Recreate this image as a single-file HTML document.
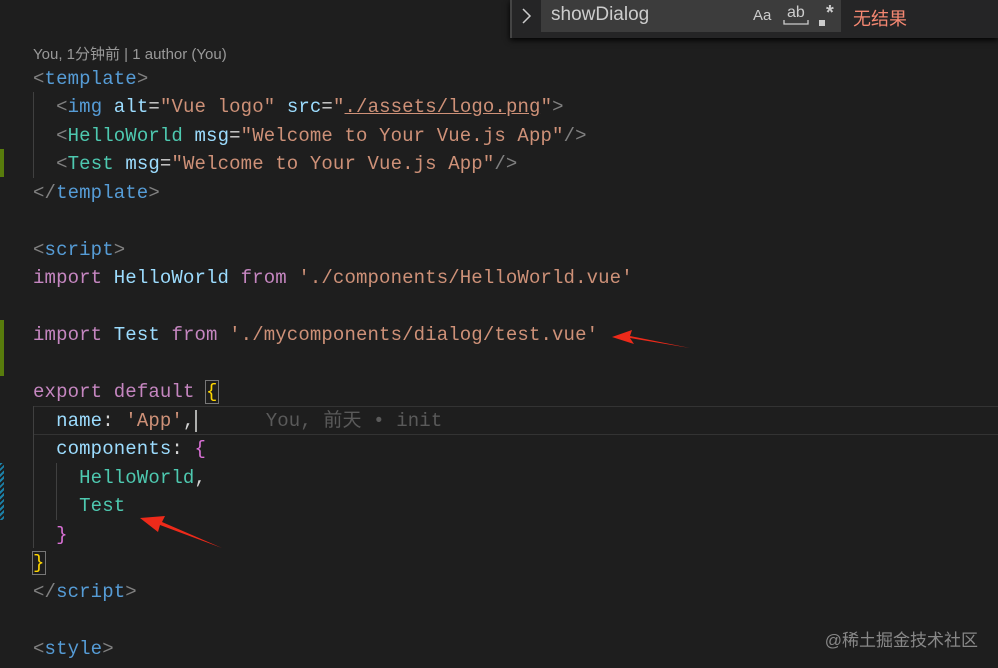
<!DOCTYPE html>
<html><head><meta charset="utf-8"><style>
body{margin:0;width:998px;height:668px;background:#1e1e1e;overflow:hidden;position:relative;font-family:"Liberation Mono","Noto Sans CJK SC",monospace;}
.l{position:absolute;left:33px;font-size:19px;letter-spacing:0.13px;line-height:28.5px;height:28.5px;white-space:pre;color:#d4d4d4}
.g{color:#808080}.t{color:#569cd6}.a{color:#9cdcfe}.s{color:#ce9178}.c{color:#4ec9b0}.k{color:#c586c0}.y{color:#ffd700}.p{color:#da70d6}.n{color:#4ec9b0}
.guide{position:absolute;width:1px;background:#404040}
</style></head><body>
<div style="position:absolute;left:33px;top:43px;font-family:'Liberation Sans','Noto Sans CJK SC',sans-serif;font-size:15px;color:#999">You, 1分钟前 | 1 author (You)</div>
<div class="l" style="top:65px"><span class="g">&lt;</span><span class="t">template</span><span class="g">&gt;</span></div>
<div class="l" style="top:93px">  <span class="g">&lt;</span><span class="t">img</span> <span class="a">alt</span>=<span class="s">"Vue logo"</span> <span class="a">src</span>=<span class="s">"<span style="text-decoration:underline">./assets/logo.png</span>"</span><span class="g">&gt;</span></div>
<div class="l" style="top:122px">  <span class="g">&lt;</span><span class="c">HelloWorld</span> <span class="a">msg</span>=<span class="s">"Welcome to Your Vue.js App"</span><span class="g">/&gt;</span></div>
<div class="l" style="top:150px">  <span class="g">&lt;</span><span class="c">Test</span> <span class="a">msg</span>=<span class="s">"Welcome to Your Vue.js App"</span><span class="g">/&gt;</span></div>
<div class="l" style="top:179px"><span class="g">&lt;/</span><span class="t">template</span><span class="g">&gt;</span></div>
<div class="l" style="top:236px"><span class="g">&lt;</span><span class="t">script</span><span class="g">&gt;</span></div>
<div class="l" style="top:264px"><span class="k">import</span> <span class="a">HelloWorld</span> <span class="k">from</span> <span class="s">'./components/HelloWorld.vue'</span></div>
<div class="l" style="top:321px"><span class="k">import</span> <span class="a">Test</span> <span class="k">from</span> <span class="s">'./mycomponents/dialog/test.vue'</span></div>
<div class="l" style="top:378px"><span class="k">export</span> <span class="k">default</span> <span class="y" style="outline:1px solid #777">{</span></div>
<div style="position:absolute;left:33px;right:0;top:406px;height:27px;border-top:1px solid #333;border-bottom:1px solid #333"></div>
<div class="l" style="top:407px">  <span class="a">name</span>: <span class="s">'App'</span>,<span style="border-left:2px solid #aeafad"></span>      <span style="color:#5a5a5a">You, 前天 • init</span></div>
<div class="l" style="top:435px">  <span class="a">components</span>: <span class="p">{</span></div>
<div class="l" style="top:464px">    <span class="n">HelloWorld</span>,</div>
<div class="l" style="top:492px">    <span class="n">Test</span></div>
<div class="l" style="top:521px">  <span class="p">}</span></div>
<div class="l" style="top:549px"><span class="y" style="outline:1px solid #777">}</span></div>
<div class="l" style="top:578px"><span class="g">&lt;/</span><span class="t">script</span><span class="g">&gt;</span></div>
<div class="l" style="top:635px"><span class="g">&lt;</span><span class="t">style</span><span class="g">&gt;</span></div>
<div class="guide" style="left:33px;top:92px;height:86px"></div>
<div class="guide" style="left:33px;top:406px;height:142px"></div>
<div class="guide" style="left:56px;top:463px;height:57px"></div>
<div style="position:absolute;left:0;top:149px;width:4px;height:28px;background:#587c0c"></div>
<div style="position:absolute;left:0;top:320px;width:4px;height:56px;background:#587c0c"></div>
<div style="position:absolute;left:0;top:463px;width:4px;height:57px;background:repeating-linear-gradient(135deg,#1b81a8 0 2px,#1e1e1e 2px 4px)"></div>
<div style="position:absolute;left:510px;top:0;width:488px;height:38px;background:#252526;box-shadow:0 2px 6px #000"></div>
<div style="position:absolute;left:510px;top:0;width:2px;height:38px;background:#444"></div>
<svg style="position:absolute;left:520px;top:6px" width="14" height="20"><path d="M3 3 L10 10 L3 17" stroke="#ccc" stroke-width="1.5" fill="none"/></svg>
<div style="position:absolute;left:541px;top:0;width:300px;height:32px;background:#3c3c3c"></div>
<div style="position:absolute;left:551px;top:4px;color:#ccc;font-family:'Liberation Sans',sans-serif;font-size:19px">showDialog</div>
<div style="position:absolute;left:753px;top:7px;color:#ccc;font-family:'Liberation Sans',sans-serif;font-size:15px">Aa</div>
<div style="position:absolute;left:787px;top:4px;color:#ccc;font-family:'Liberation Sans',sans-serif;font-size:16px">ab</div>
<svg style="position:absolute;left:783px;top:20px" width="26" height="6"><path d="M1 0 V4 H25 V0" stroke="#ccc" stroke-width="1.3" fill="none"/></svg>
<div style="position:absolute;left:819px;top:20px;width:6px;height:6px;background:#ccc"></div>
<div style="position:absolute;left:826px;top:2px;color:#ccc;font-family:'Liberation Sans',sans-serif;font-size:20px;font-weight:bold">*</div>
<div style="position:absolute;left:853px;top:5px;color:#f48771;font-family:'Liberation Sans','Noto Sans CJK SC',sans-serif;font-size:18px">无结果</div>
<svg style="position:absolute;left:0;top:0" width="998" height="668">
<path d="M690 348 L630 338 L634 344 L612 337 L632 330 L630 336 Z" fill="#ee2a1a"/>
<path d="M222 548 L160 525 L158 532 L140 518 L165 516 L162 522 Z" fill="#ee2a1a"/>
</svg>
<div style="position:absolute;right:20px;top:626px;color:#888;font-family:'Liberation Sans','Noto Sans CJK SC',sans-serif;font-size:17px">@稀土掘金技术社区</div>
</body></html>
